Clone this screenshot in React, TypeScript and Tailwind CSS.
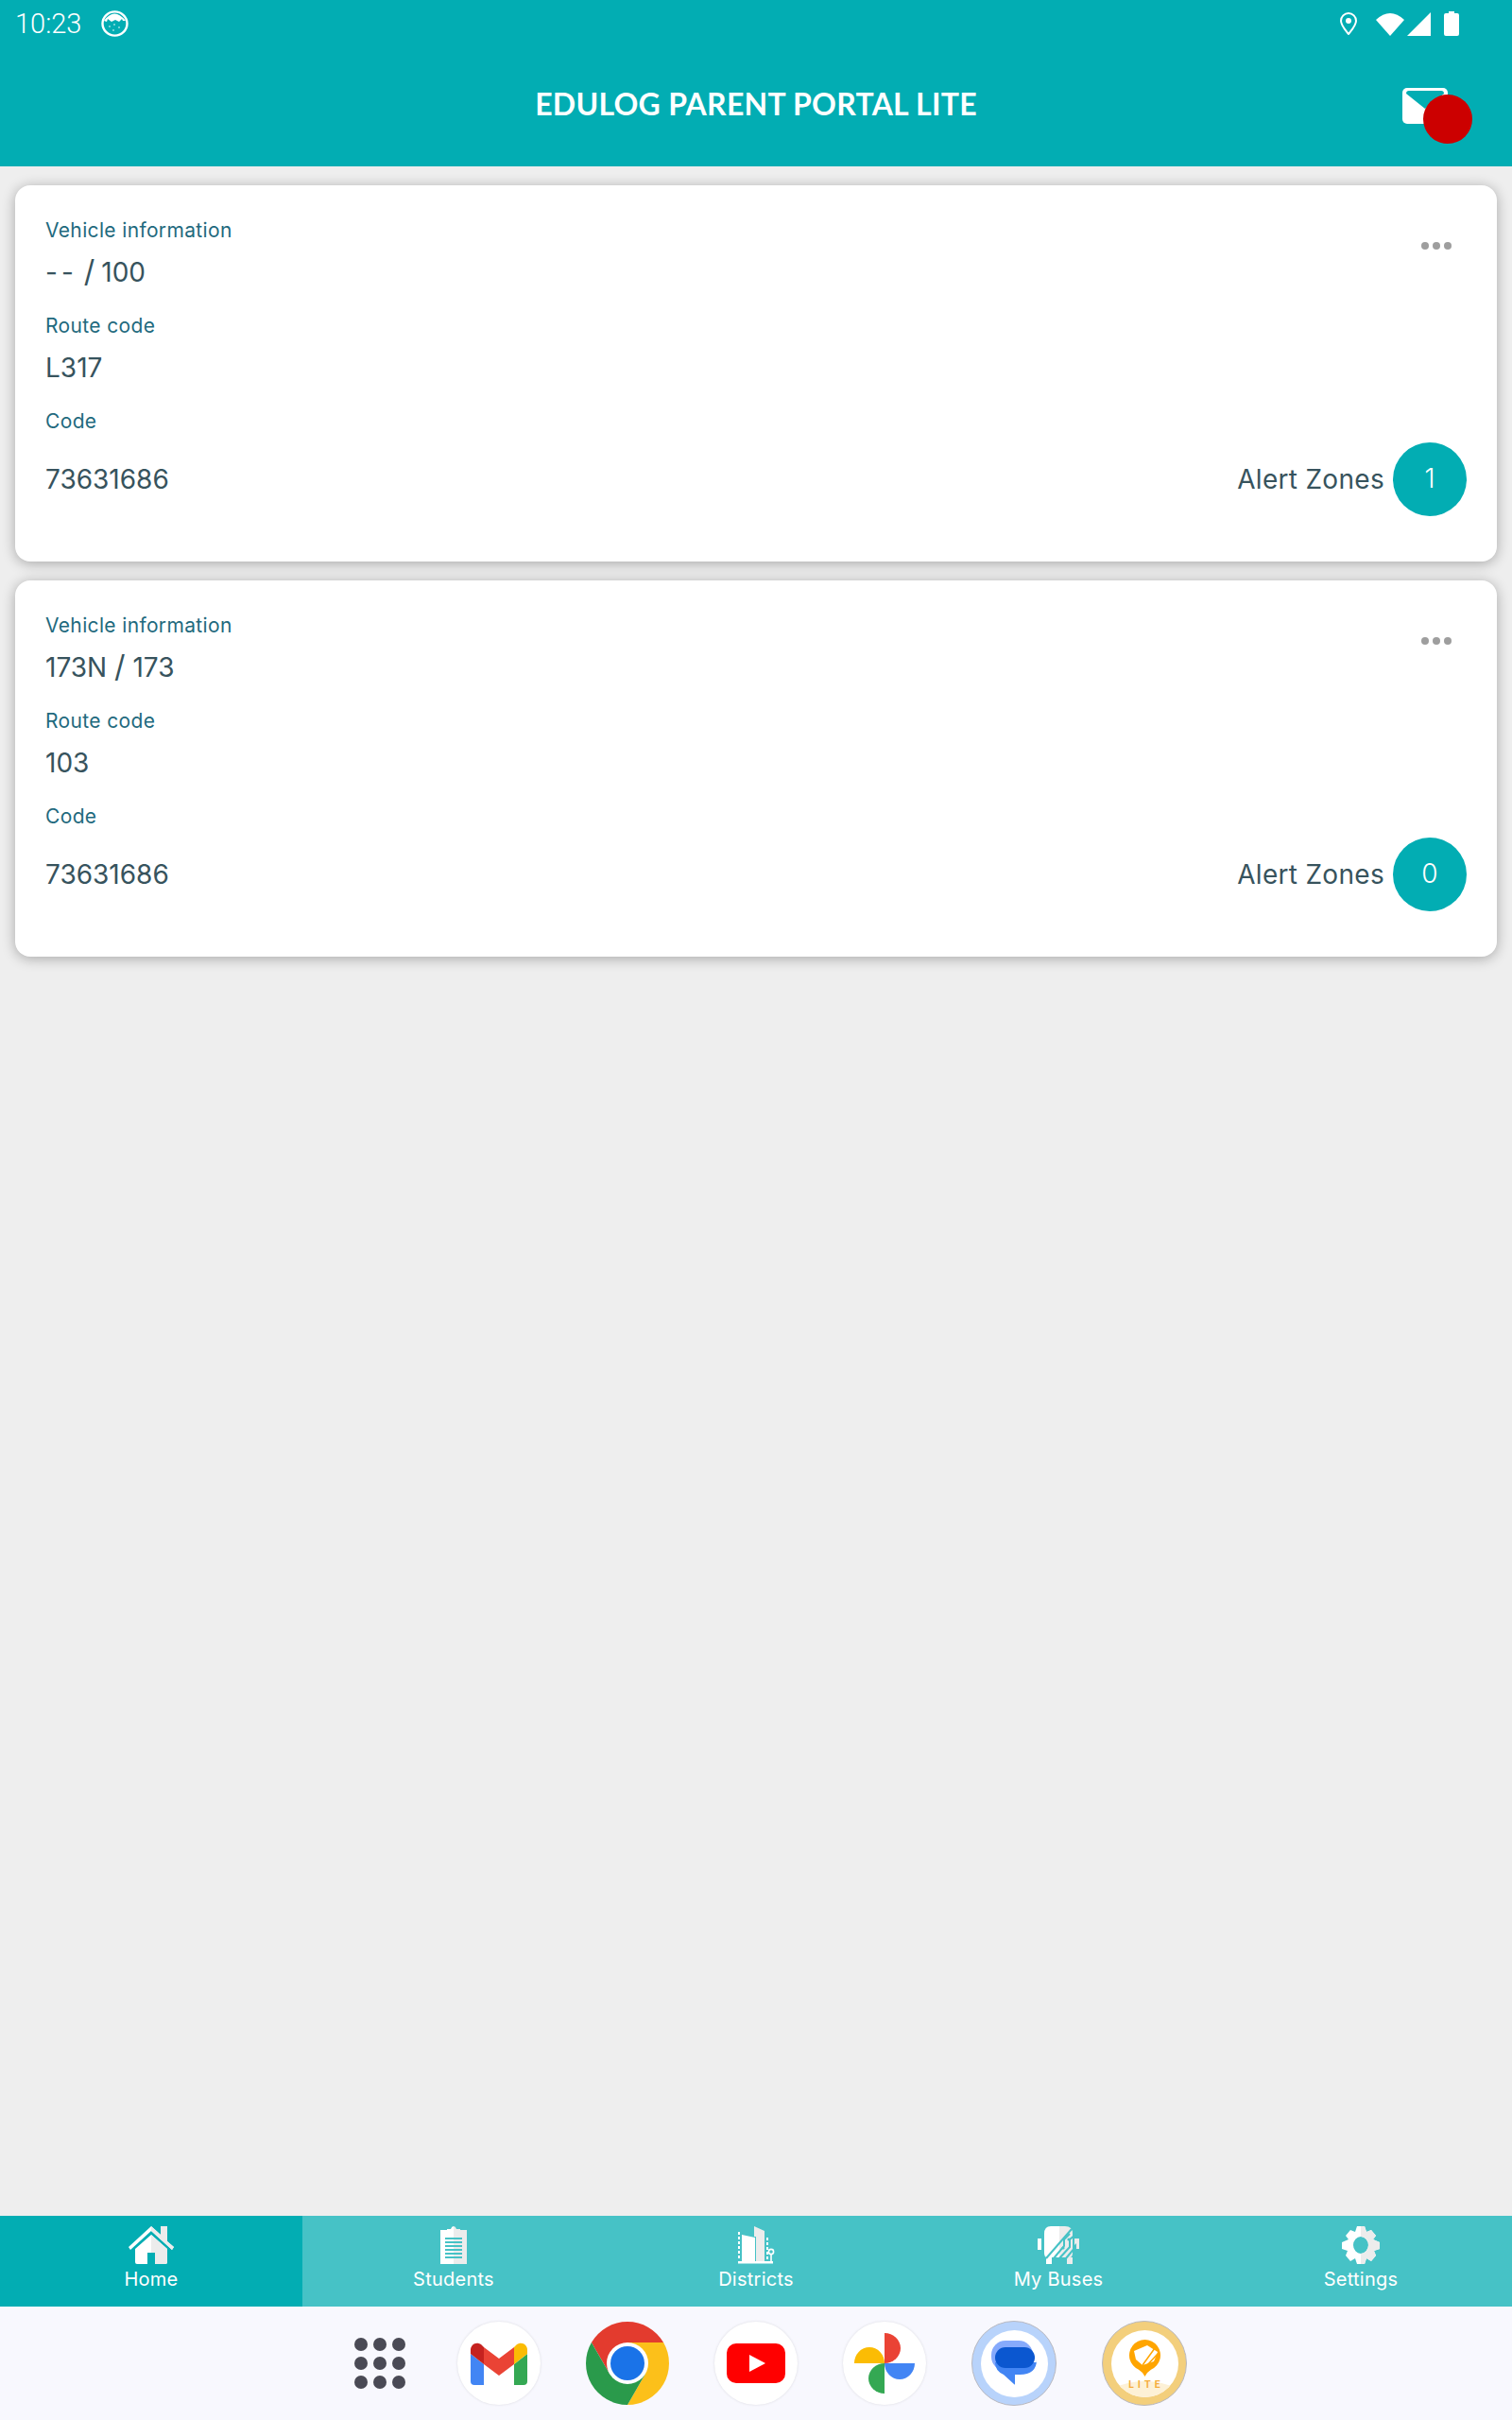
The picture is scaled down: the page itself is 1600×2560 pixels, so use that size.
import type { ReactNode } from "react";

const TEAL = "#02adb3";
const SHADE = "#ececec";

// taller slash than the digits around it
function Slash({ className }: { className?: string }) {
  return <span className={`text-[32px] leading-[0] ${className ?? ""}`}>/</span>;
}

const vehicles = [
  {
    vehicle: (
      <>
        <span className="tracking-[4px]">--</span>
        <Slash className="mx-[7px]" />
        {"100"}
      </>
    ),
    route: "L317",
    code: "73631686",
    alerts: 1,
  },
  {
    vehicle: (
      <>
        {"173N "}
        <Slash />
        {" 173"}
      </>
    ),
    route: "103",
    code: "73631686",
    alerts: 0,
  },
];

// white on the left half, light grey on the right half
function TwoTone({ id, w, h, children, className }: { id: string; w: number; h: number; children: ReactNode; className?: string }) {
  return (
    <svg width={w} height={h} viewBox={`0 0 ${w} ${h}`} className={className}>
      <defs>
        <clipPath id={id}>
          <rect x={w / 2} y="0" width={w / 2} height={h} />
        </clipPath>
      </defs>
      <g fill="#fff">{children}</g>
      <g fill={SHADE} clipPath={`url(#${id})`}>{children}</g>
    </svg>
  );
}

function HomeIcon() {
  return (
    <TwoTone id="home" w={48} h={40}>
      <path fillRule="evenodd" d="M24 0 L34 9 V0 H41 V16 L48 22 L46 25 L24 5 L2 25 L0 22 Z" />
      <path fillRule="evenodd" d="M24 9 L41 24 V38 Q41 40 39 40 H28 V28 H20 V40 H9 Q7 40 7 38 V24 Z" />
    </TwoTone>
  );
}

function StudentsIcon() {
  const lines = [12, 16, 20, 24, 28, 32];
  return (
    <svg width="28" height="40" viewBox="0 0 28 40">
      <rect x="0" y="4" width="14" height="36" fill="#fff" />
      <rect x="14" y="4" width="14" height="36" fill={SHADE} />
      <path d="M7 3 H11 Q12 0 14 0 V9 H7 Z" fill="#fff" />
      <path d="M14 0 Q16 0 17 3 H21 V9 H14 Z" fill={SHADE} />
      {lines.map((y) => (
        <rect key={y} x="5" y={y} width="18" height="2" fill="#46c2c6" />
      ))}
    </svg>
  );
}

function DistrictsIcon() {
  return (
    <svg width="40" height="40" viewBox="0 0 40 40" fill="#fff">
      <path d="M1 37 H38 V39.500 H1 Z" />
      <path d="M5 9 L19 12 V37 H5 Z" />
      <path d="M18 0 L29 5 V37 H20 V11 L18 11 Z" fill={SHADE} />
      {[6, 11, 16, 21, 26, 31].map((y) => (
        <rect key={y} x="1" y={y} width="2" height="3" />
      ))}
      {[12, 17, 22, 27, 32].map((y) => (
        <rect key={y} x="31" y={y} width="2" height="3" />
      ))}
      <circle cx="36" cy="27" r="2.600" fill="none" stroke="#fff" strokeWidth="1.600" />
      <rect x="35.200" y="30" width="1.600" height="7" />
    </svg>
  );
}

function BusesIcon() {
  return (
    <svg width="44" height="40" viewBox="0 0 44 40">
      <rect x="0" y="13" width="4" height="12" fill="#fff" />
      <path d="M23 0 H14 Q7 0 7 8 V28 Q7 33 10 33 H23 Z" fill="#fff" />
      <path d="M23 0 H29 Q37 0 37 8 V28 Q37 33 34 33 H23 Z" fill={SHADE} />
      <rect x="9" y="33" width="6" height="7" fill="#fff" />
      <rect x="31" y="33" width="6" height="7" fill={SHADE} />
      <g stroke="#46c2c6" strokeWidth="2" fill="none">
        <path d="M9 34 L36 3" />
        <path d="M17 34 L28 21 V14 L34 8" />
        <path d="M23 34 L34 22 V14 L40 9" />
        <path d="M30 34 L40 22" />
      </g>
      <circle cx="27" cy="23" r="1.600" fill="#46c2c6" />
      <circle cx="33" cy="14" r="1.600" fill="#46c2c6" />
      <path d="M39 13 H44 V24 H41 V18 L39 20 Z" fill={SHADE} />
    </svg>
  );
}

function SettingsIcon() {
  return (
    <TwoTone id="gear" w={40} h={40}>
      <path
        fillRule="evenodd"
        d="M16 0 H24 L26 6 L31 4 L36 10 L33 14 L40 17 V24 L34 26 L36 31 L31 37 L26 34 L24 40 H16 L14 34 L9 37 L4 31 L6 26 L0 24 V17 L7 14 L4 10 L9 4 L14 6 Z M20 11 A8 9 0 1 0 20 29 A8 9 0 1 0 20 11 Z"
      />
    </TwoTone>
  );
}

const tabs = [
  { label: "Home", icon: <HomeIcon />, active: true },
  { label: "Students", icon: <StudentsIcon />, active: false },
  { label: "Districts", icon: <DistrictsIcon />, active: false },
  { label: "My Buses", icon: <BusesIcon />, active: false },
  { label: "Settings", icon: <SettingsIcon />, active: false },
];

function StatusBar() {
  return (
    <div className="flex h-[50px] items-center pl-[16px] pr-[56px] text-white">
      <span className="font-['Roboto',sans-serif] text-[29px] font-light leading-none">10:23</span>
      <svg width="29" height="28" viewBox="0 0 29 28" className="ml-[21px]">
        <ellipse cx="14.500" cy="14" rx="13" ry="12.600" fill="none" stroke="#fff" strokeWidth="2.400" />
        <path d="M3 11 Q14 -4 26 11 L23 11 L22 9 L19 12 L15 10 L11 12 L7 9 L6 12 Z" fill="#fff" />
        <g fill="#fff">
          <circle cx="9" cy="17" r="0.800" />
          <circle cx="14" cy="15" r="0.800" />
          <circle cx="19" cy="18" r="0.800" />
          <circle cx="13" cy="21" r="0.800" />
        </g>
      </svg>
      <div className="ml-auto flex items-center">
        <svg width="18" height="24" viewBox="0 0 18 24">
          <path d="M9 1 A8 8 0 0 0 1 9 C1 14 6 19 9 23 C12 19 17 14 17 9 A8 8 0 0 0 9 1 Z" fill="none" stroke="#fff" strokeWidth="2" />
          <circle cx="9" cy="9" r="3" fill="#fff" />
        </svg>
        <svg width="30" height="25" viewBox="0 0 30 25" className="ml-[20px]">
          <path d="M0 8 Q15 -6 30 8 L15 25 Z" fill="#fff" />
        </svg>
        <svg width="25" height="25" viewBox="0 0 25 25" className="ml-[3px]">
          <path d="M25 0 V25 H0 Z" fill="#fff" />
        </svg>
        <svg width="16" height="26" viewBox="0 0 16 26" className="ml-[14px]">
          <path d="M5 0 H11 V2 H14 Q16 2 16 4 V24 Q16 26 14 26 H2 Q0 26 0 24 V4 Q0 2 2 2 H5 Z" fill="#fff" />
        </svg>
      </div>
    </div>
  );
}

function Header() {
  return (
    <header className="h-[176px] shrink-0 bg-[#02adb3]">
      <StatusBar />
      <div className="grid h-[120px] grid-cols-[1fr_auto_1fr] items-center">
        <div />
        <h1 className="font-['Lato',sans-serif] text-[32px] font-bold leading-none tracking-[0.26px] text-white">
          EDULOG PARENT PORTAL LITE
        </h1>
        <div className="flex justify-end pr-[68px]">
          <div className="relative mt-[4px] h-[38px] w-[48px]">
            <svg width="48" height="38" viewBox="0 0 48 38">
              <rect width="48" height="38" rx="5" fill="#fff" />
              <path d="M4 6 Q4 3 7 3 H41 Q44 3 44 6 L24 22 Z" fill={TEAL} />
            </svg>
            <span className="absolute left-[22px] top-[7px] h-[52px] w-[52px] rounded-full bg-[#cc0000]" />
          </div>
        </div>
      </div>
    </header>
  );
}

function Label({ children }: { children: ReactNode }) {
  return <p className="text-[21px] leading-[30px] tracking-[0.35px] text-[#1f6a7e]">{children}</p>;
}

function Value({ children }: { children: ReactNode }) {
  return <p className="text-[28px] leading-[40px] text-[#37535d]">{children}</p>;
}

function VehicleCard({ vehicle, route, code, alerts }: (typeof vehicles)[number]) {
  return (
    <section className="h-[398px] rounded-[16px] bg-white pl-[32px] pr-[32px] pt-[33px] shadow-[0_2px_14px_rgba(0,0,0,0.3)]">
      <div className="flex items-start justify-between">
        <div>
          <Label>Vehicle information</Label>
          <div className="mt-[9px]">
            <Value>{vehicle}</Value>
          </div>
        </div>
        <div className="mr-[16px] mt-[27px] flex gap-[4px]">
          <span className="h-[8px] w-[8px] rounded-full bg-[#9e9e9e]" />
          <span className="h-[8px] w-[8px] rounded-full bg-[#9e9e9e]" />
          <span className="h-[8px] w-[8px] rounded-full bg-[#9e9e9e]" />
        </div>
      </div>
      <div className="mt-[22px]">
        <Label>Route code</Label>
      </div>
      <div className="mt-[9px]">
        <Value>{route}</Value>
      </div>
      <div className="mt-[22px]">
        <Label>Code</Label>
      </div>
      <div className="mt-[7px] flex items-center justify-between">
        <Value>{code}</Value>
        <div className="flex items-center gap-[9px]">
          <div className="tracking-[0.3px]">
            <Value>Alert Zones</Value>
          </div>
          <span className="flex h-[78px] w-[78px] items-center justify-center rounded-full bg-[#02adb3] pb-[2px] text-[28px] font-light text-white">
            {alerts}
          </span>
        </div>
      </div>
    </section>
  );
}

function BottomNav() {
  return (
    <nav className="grid h-[96px] shrink-0 grid-cols-5">
      {tabs.map((tab) => (
        <div
          key={tab.label}
          className={
            tab.active
              ? "flex flex-col items-center bg-[#02adb3] pt-[11px] text-white"
              : "flex flex-col items-center bg-[#46c2c6] pt-[11px] text-white"
          }
        >
          <div className="flex h-[40px] items-center justify-center">{tab.icon}</div>
          <span className="mt-[1px] text-[20px] leading-[30px] tracking-[0.25px]">{tab.label}</span>
        </div>
      ))}
    </nav>
  );
}

function DockCircle({ children }: { children: ReactNode }) {
  return (
    <div className="flex h-[88px] w-[88px] shrink-0 items-center justify-center rounded-full bg-white shadow-[0_0_3px_rgba(0,0,0,0.12)]">
      {children}
    </div>
  );
}

function Dock() {
  const dots = [0, 1, 2, 3, 4, 5, 6, 7, 8];
  return (
    <div className="flex h-[120px] shrink-0 items-center bg-[#f8f8fe] pl-[375px]">
      <div className="mr-[7px] grid grid-cols-3 gap-x-[6px] gap-y-[6px]">
        {dots.map((d) => (
          <span key={d} className="h-[14px] w-[14px] rounded-full bg-[#4a4a55]" />
        ))}
      </div>
      <div className="ml-[48px] flex items-center gap-[48px]">
        <DockCircle>
          <svg width="60" height="45" viewBox="0 0 60 45">
            <path d="M0 12 L14 23 V45 H4 Q0 45 0 41 Z" fill="#4285f4" />
            <path d="M60 12 L46 23 V45 H56 Q60 45 60 41 Z" fill="#34a853" />
            <path d="M14 5 L30 17 L46 5 V23 L30 35 L14 23 Z" fill="#ea4335" />
            <path d="M0 12 V7 A7 7 0 0 1 11 2 L14 5 V23 Z" fill="#c5221f" />
            <path d="M60 12 V7 A7 7 0 0 0 49 2 L46 5 V23 Z" fill="#fbbc04" />
          </svg>
        </DockCircle>
        <svg width="88" height="88" viewBox="0 0 88 88" className="shrink-0">
          <path d="M82.100 22 A44 44 0 0 0 5.900 22 L25 55 L44 22 Z" fill="#e33b2e" />
          <path d="M82.100 22 H44 L63 55 L44 88 A44 44 0 0 0 82.100 22 Z" fill="#fcc01a" />
          <path d="M5.900 22 A44 44 0 0 0 44 88 L63 55 H25 Z" fill="#2a9a4b" />
          <circle cx="44" cy="44" r="22" fill="#fff" />
          <circle cx="44" cy="44" r="18" fill="#1a73e8" />
        </svg>
        <DockCircle>
          <svg width="62" height="42" viewBox="0 0 62 42">
            <rect width="62" height="42" rx="10" fill="#ff0000" />
            <path d="M24 12 L41 21 L24 30 Z" fill="#fff" />
          </svg>
        </DockCircle>
        <DockCircle>
          <svg width="64" height="64" viewBox="-32 -32 64 64">
            <path d="M0 0 V-32 A17 16 0 0 1 0 0 Z" fill="#ea4335" />
            <path d="M0 0 H-32 A16 17 0 0 1 0 0 Z" fill="#fbbc04" />
            <path d="M0 0 H32 A16 17 0 0 1 0 0 Z" fill="#4285f4" />
            <path d="M0 0 V32 A17 16 0 0 1 0 0 Z" fill="#34a853" />
          </svg>
        </DockCircle>
        <div className="flex h-[90px] w-[90px] shrink-0 items-center justify-center rounded-full border border-[#b9b9c0] bg-[#b8d3fb]">
          <div className="flex h-[71px] w-[71px] items-center justify-center rounded-full bg-white">
            <svg width="48" height="48" viewBox="0 0 48 48">
              <rect x="0" y="0" width="44" height="32" rx="15" fill="#86aafc" />
              <path d="M4 23 H48 V20 Q48 36 30 36 H25 V46 Q25 47 24 46 L13 36 Q4 32 4 23 Z" fill="#4285f4" />
              <rect x="4" y="7" width="42" height="22" rx="11" fill="#0b57d0" />
            </svg>
          </div>
        </div>
        <div className="flex h-[90px] w-[90px] shrink-0 items-center justify-center rounded-full border border-[#b9b9c0] bg-[#f3cf7c]">
          <div className="h-[71px] w-[71px] overflow-hidden rounded-full bg-white">
            <svg width="71" height="71" viewBox="0 0 71 71">
              <path d="M0 71 V62 Q35 46 71 62 V71 Z" fill="#fdf1d6" />
              <path d="M35.500 49 Q33 44 29 41.700 A16.500 16.500 0 1 1 42 41.700 Q38 44 35.500 49 Z" fill="#ffa500" />
              <path d="M24 22 L38 16 L49 23 L45 33 L33 37 L26 31 Z" fill="#fff" />
              <path d="M33 37 L46 19 M38 37 L49 25" stroke="#ffa500" strokeWidth="1.500" />
              <text x="37" y="61" textAnchor="middle" fontFamily="Lato, sans-serif" fontSize="11" fontWeight="700" letterSpacing="4" fill="#f5ad3b">
                LITE
              </text>
            </svg>
          </div>
        </div>
      </div>
    </div>
  );
}

export default function App() {
  return (
    <div className="flex h-[2560px] w-[1600px] flex-col overflow-hidden bg-[#eeeeee] font-['Inter',sans-serif]">
      <Header />
      <main className="flex-1 space-y-[20px] px-[16px] pt-[20px]">
        {vehicles.map((v, i) => (
          <VehicleCard key={i} {...v} />
        ))}
      </main>
      <BottomNav />
      <Dock />
    </div>
  );
}
